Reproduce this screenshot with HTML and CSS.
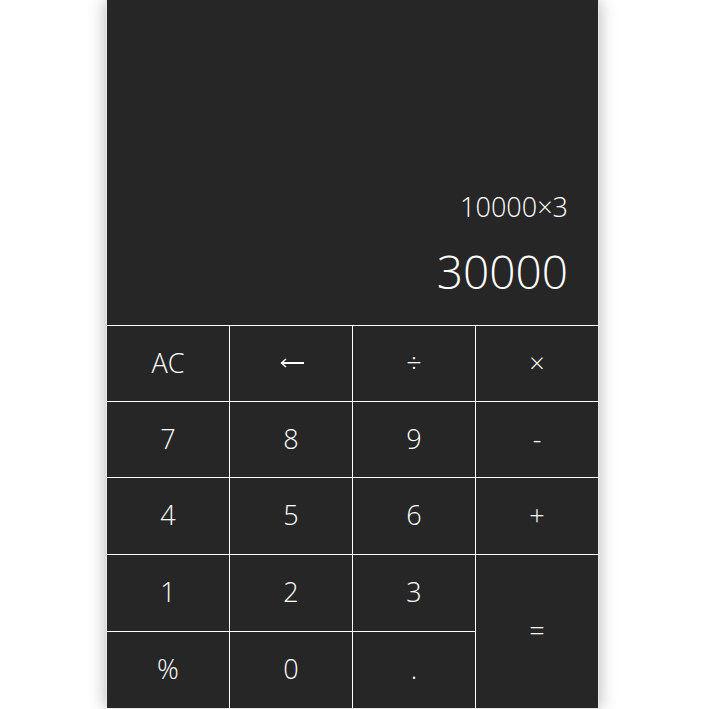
FILE: index.html
```html
<!DOCTYPE html>
<html lang="en">
<head>
<meta charset="utf-8">
<title>Calculator</title>
<link rel="stylesheet" href="styles.css">
</head>
<body>
<div class="calc">
  <div class="display">
    <div class="expr">10000×3</div>
    <div class="result">30000</div>
  </div>
  <div class="keys">
    <div class="key">AC</div>
    <div class="key" aria-label="←"><svg class="back" width="24" height="10" viewBox="0 0 24 10"><path d="M1 5 H24" stroke="#fff" stroke-width="2" fill="none"/><path d="M6 1 L1.5 5 L6 9" stroke="#fff" stroke-width="1.4" fill="none"/></svg></div>
    <div class="key">÷</div>
    <div class="key">×</div>
    <div class="key">7</div>
    <div class="key">8</div>
    <div class="key">9</div>
    <div class="key">-</div>
    <div class="key">4</div>
    <div class="key">5</div>
    <div class="key">6</div>
    <div class="key">+</div>
    <div class="key">1</div>
    <div class="key">2</div>
    <div class="key">3</div>
    <div class="key eq">=</div>
    <div class="key">%</div>
    <div class="key">0</div>
    <div class="key">.</div>
  </div>
</div>
</body>
</html>
```
FILE: styles.css
```css
html, body {
  margin: 0;
  padding: 0;
  background: #ffffff;
  overflow: hidden;
}
body {
  font-family: "Open Sans", "Noto Sans", sans-serif;
  font-weight: 300;
  color: #ffffff;
}
.calc {
  width: 491px;
  margin-left: 106px;
  border: 1px solid #e8e8e8;
  border-top: none;
  background: #ffffff;
  box-shadow: 0 0 16px rgba(0, 0, 0, 0.3);
}
.display {
  height: 325px;
  background: #262626;
  display: flex;
  flex-direction: column;
  justify-content: flex-end;
  align-items: flex-end;
  padding: 0 30px 28px 0;
  box-sizing: border-box;
}
.expr {
  font-size: 27px;
  line-height: 36px;
  margin-bottom: 20px;
}
.result {
  font-size: 46px;
  line-height: 52px;
}
.keys {
  display: grid;
  grid-template-columns: repeat(4, 122px);
  grid-template-rows: 75px 75px 76px 76px 76px;
  gap: 1px;
  padding-top: 1px;
  background: #ffffff;
}
.key {
  background: #262626;
  display: flex;
  align-items: center;
  justify-content: center;
  font-size: 27px;
  padding-bottom: 3px;
}
.back {
  margin-top: 2px;
  margin-left: 1px;
}
.eq {
  grid-column: 4;
  grid-row: 4 / span 2;
}
```
